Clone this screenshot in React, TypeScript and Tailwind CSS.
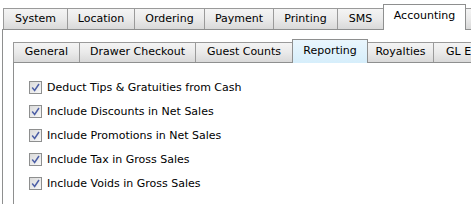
import React from 'react';

type Tab = { label: string; w: string; active?: boolean; clip?: boolean };

const topTabs: Tab[] = [
  { label: 'System', w: 'w-[65px]' },
  { label: 'Location', w: 'w-[68px]' },
  { label: 'Ordering', w: 'w-[71px]' },
  { label: 'Payment', w: 'w-[70px]' },
  { label: 'Printing', w: 'w-[65px]' },
  { label: 'SMS', w: 'w-[47px]' },
  { label: 'Accounting', w: 'w-[83px]', active: true },
  { label: '', w: 'w-[60px]' },
];

const subTabs: Tab[] = [
  { label: 'General', w: 'w-[67px]' },
  { label: 'Drawer Checkout', w: 'w-[117px]' },
  { label: 'Guest Counts', w: 'w-[98px]' },
  { label: 'Reporting', w: 'w-[76px]', active: true },
  { label: 'Royalties', w: 'w-[67px]' },
  { label: 'GL E', w: 'w-[70px]', clip: true },
];

const options = [
  'Deduct Tips & Gratuities from Cash',
  'Include Discounts in Net Sales',
  'Include Promotions in Net Sales',
  'Include Tax in Gross Sales',
  'Include Voids in Gross Sales',
];

const Check: React.FC = () => (
  <span className="w-[13px] h-[13px] border border-[#8e8f8f] bg-gradient-to-br from-[#dadada] to-[#f8f8f8] flex items-center justify-center shrink-0">
    <svg width="9" height="9" viewBox="0 0 9 9">
      <path d="M1.2 4.6 L3.6 7.4 L8 1" fill="none" stroke="#4d5fa6" strokeWidth="1.5" />
    </svg>
  </span>
);

const TabStrip: React.FC<{ tabs: Tab[]; activeBg: string; tall: string; short: string }> = ({ tabs, activeBg, tall, short }) => (
  <div className="flex items-end whitespace-nowrap">
    {tabs.map((t, i) =>
      t.active ? (
        <div
          key={t.label}
          className={`relative z-10 ${t.w} ${tall} ${activeBg} ${i ? '-ml-px' : ''} -mb-px pt-[3px] border border-b-0 border-[#8e8f8f] flex justify-center shrink-0`}
        >
          {t.label}
        </div>
      ) : (
        <div
          key={t.label || i}
          className={`${t.w} ${short} ${i ? '-ml-px' : ''} border border-b-0 border-[#9a9a9a] bg-gradient-to-b from-[#f4f4f4] via-[#eaeaea] to-[#d9d9d9] flex items-center ${t.clip ? 'pl-[12px]' : 'justify-center'} shrink-0 overflow-hidden`}
        >
          {t.label}
        </div>
      )
    )}
  </div>
);

const App: React.FC = () => {
  return (
    <div
      className="w-[471px] h-[204px] bg-white overflow-hidden text-[11px] text-black"
      style={{ fontFamily: '"DejaVu Sans", Verdana, sans-serif' }}
    >
      {/* top tabs */}
      <div className="h-[29px] pl-[3px] flex items-end">
        <TabStrip tabs={topTabs} activeBg="bg-white" tall="h-[26px]" short="h-[21px]" />
      </div>
      <div className="ml-[2px] h-[175px] border-l border-t border-[#8e8f8f] pl-[10px]">
        {/* sub tabs */}
        <div className="h-[32px] flex items-end">
          <TabStrip
            tabs={subTabs}
            activeBg="bg-gradient-to-b from-[#eaf6fd] to-[#d6eefb]"
            tall="h-[24px]"
            short="h-[20px]"
          />
        </div>
        <div className="h-[150px] border-l border-t border-[#8e8f8f] pl-[15px] pt-[18px] flex flex-col gap-[11px]">
          {options.map(o => (
            <label key={o} className="flex items-center gap-[5px] h-[13px]">
              <Check />
              <span className="leading-[13px]">{o}</span>
            </label>
          ))}
        </div>
      </div>
    </div>
  );
};

export default App;
